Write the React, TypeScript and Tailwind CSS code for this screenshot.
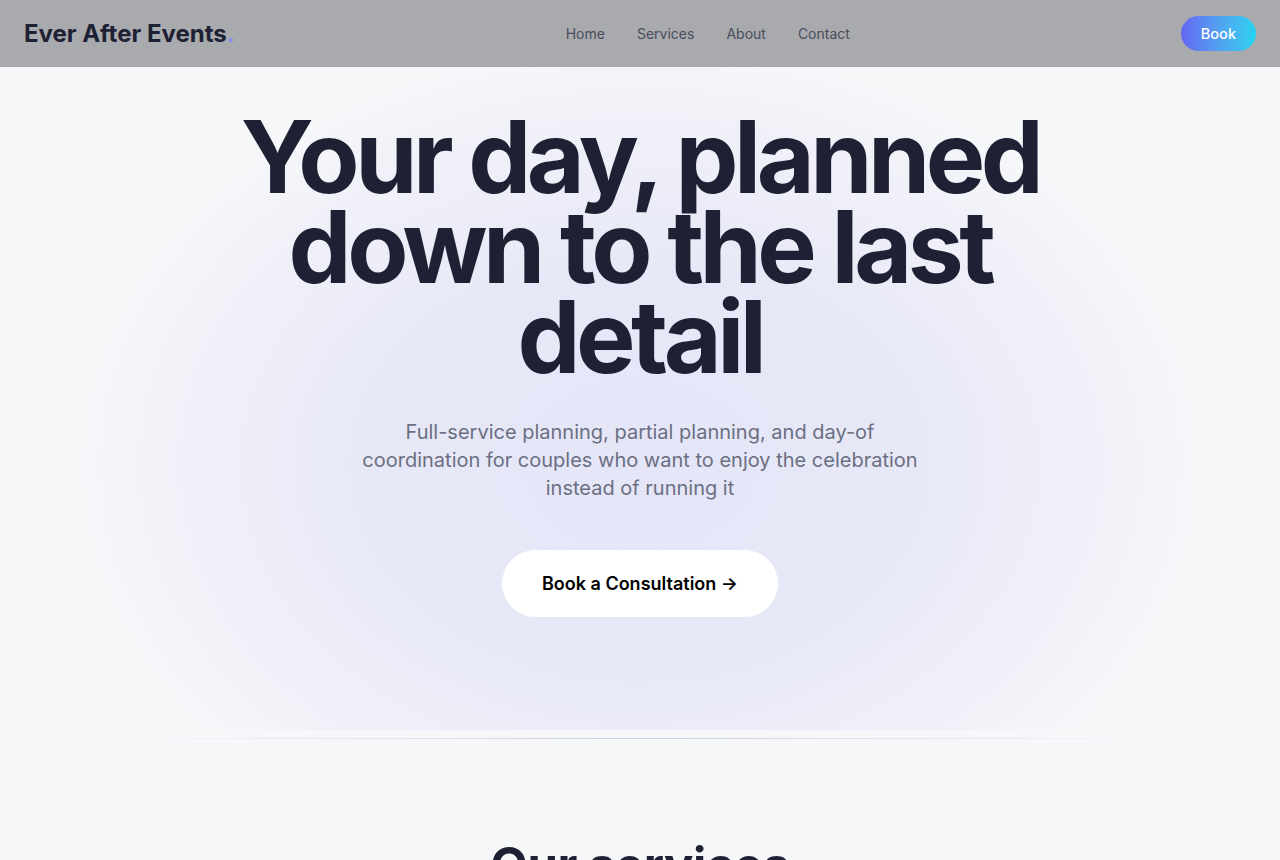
const navLinks = ["Home", "Services", "About", "Contact"];

function Header() {
  return (
    <header className="h-[68px] bg-[#a9aaae] border-b border-[#f1f2f6] px-6 flex items-center justify-between">
      <a className="text-[24px] font-bold text-[#1e2133] leading-none">
        Ever After Events<span className="text-[#8b8cf5]">.</span>
      </a>
      <nav className="flex items-center gap-8">
        {navLinks.map((link) => (
          <a key={link} className="text-[14px] text-[#4a4d5c]">
            {link}
          </a>
        ))}
      </nav>
      <button className="h-[35px] px-5 rounded-full bg-gradient-to-r from-[#6366f1] to-[#22d3ee] text-white text-[14.5px] font-medium">
        Book
      </button>
    </header>
  );
}

function Hero() {
  return (
    <section className="h-[662px] pt-[44px] flex flex-col items-center bg-[radial-gradient(ellipse_560px_420px_at_50%_60%,#e4e5f7_0%,#e7e8f7_45%,#eeeff8_75%,#f6f7f9_100%)]">
      <h1 className="text-[100px] leading-[90px] font-bold tracking-[-0.045em] text-[#1e2133] text-center max-w-[860px]">
        Your day, planned down to the last detail
      </h1>
      <p className="mt-9 max-w-[580px] text-[20px] leading-[28px] text-[#6b6f82] text-center">
        Full-service planning, partial planning, and day-of coordination for couples who want to
        enjoy the celebration instead of running it
      </p>
      <button className="mt-12 h-[67px] px-10 rounded-full bg-white text-[18px] font-semibold text-black">
        Book a Consultation →
      </button>
    </section>
  );
}

export default function App() {
  return (
    <div className="min-h-screen bg-[#f6f7f9] font-['Inter',sans-serif] overflow-hidden">
      <Header />
      <Hero />
      <div className="mt-2 mx-auto max-w-[1040px] h-px bg-gradient-to-r from-transparent via-[#cdceeb] to-transparent" />
      <section className="pt-[90px] flex flex-col items-center">
        <h2 className="text-[49px] font-bold tracking-[-0.01em] text-[#1e2133]">Our services</h2>
      </section>
    </div>
  );
}
